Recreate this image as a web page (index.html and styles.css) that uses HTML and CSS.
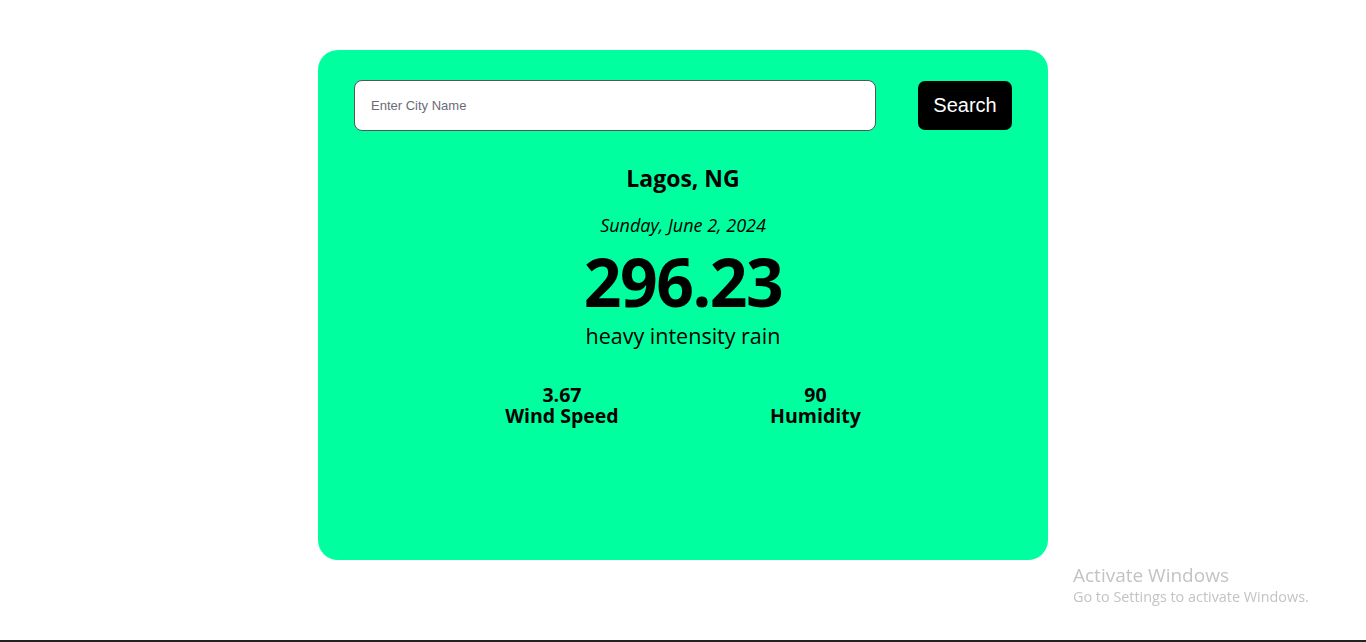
FILE: index.html
```html
<!DOCTYPE html>
<html lang="en">
<head>
<meta charset="utf-8">
<title>Weather</title>
<link rel="stylesheet" href="styles.css">
</head>
<body>
<main class="card">
  <div class="search-row">
    <input class="city-input" type="text" placeholder="Enter City Name">
    <button class="search-btn">Search</button>
  </div>
  <h2 class="city">Lagos, NG</h2>
  <p class="date">Sunday, June 2, 2024</p>
  <p class="temp">296.23</p>
  <p class="desc">heavy intensity rain</p>
  <div class="stats">
    <div class="stat"><span>3.67</span><span>Wind Speed</span></div>
    <div class="stat"><span>90</span><span>Humidity</span></div>
  </div>
</main>
<div class="activate">
  <div class="activate-title">Activate Windows</div>
  <div class="activate-sub">Go to Settings to activate Windows.</div>
</div>
<div class="taskbar-edge"></div>
</body>
</html>
```

FILE: styles.css
```css
* { box-sizing: border-box; }
html, body { margin: 0; padding: 0; }
body {
  background: #ffffff;
  font-family: "Open Sans", "Noto Sans", sans-serif;
  color: #000;
  height: 642px;
  overflow: hidden;
}
.card {
  width: 730px;
  height: 510px;
  margin: 50px auto 0;
  background: #00ff9f;
  border-radius: 20px;
  padding: 30px 36px 0;
  text-align: center;
}
.search-row {
  display: flex;
  justify-content: space-between;
  align-items: center;
  height: 51px;
}
.city-input {
  width: 522px;
  height: 51px;
  border: 1px solid #555;
  border-radius: 8px;
  padding: 0 16px;
  font-family: "Liberation Sans", Arial, sans-serif;
  font-size: 13px;
  background: #fff;
  outline: none;
}
.city-input::placeholder { color: #6b6b78; }
.search-btn {
  width: 94px;
  height: 49px;
  border: none;
  border-radius: 7px;
  background: #000;
  color: #fff;
  font-family: "Liberation Sans", Arial, sans-serif;
  font-size: 20px;
  padding: 0;
  cursor: pointer;
}
.city {
  margin: 32px 0 0;
  font-size: 23px;
  line-height: 31px;
  font-weight: 700;
}
.date {
  margin: 19px 0 0;
  font-size: 18px;
  line-height: 25px;
  font-style: italic;
}
.temp {
  margin: 3px 0 0;
  font-size: 66px;
  line-height: 80px;
  font-weight: 700;
  letter-spacing: -1.5px;
}
.desc {
  margin: 0;
  font-size: 21.5px;
  line-height: 29px;
}
.stats {
  width: 507px;
  margin: 34px auto 0;
  display: flex;
  justify-content: space-around;
}
.stat {
  display: flex;
  flex-direction: column;
  font-size: 19.5px;
  line-height: 21px;
  font-weight: 700;
}
.activate {
  position: fixed;
  left: 1073px;
  top: 563px;
  color: #c3c3c3;
  font-family: "Open Sans", "Noto Sans", sans-serif;
}
.activate-title { font-size: 19px; line-height: 24px; }
.activate-sub { font-size: 14.4px; line-height: 20px; }
.taskbar-edge {
  position: fixed;
  left: 0;
  right: 0;
  bottom: 0;
  height: 2px;
  background: #222;
}
```
